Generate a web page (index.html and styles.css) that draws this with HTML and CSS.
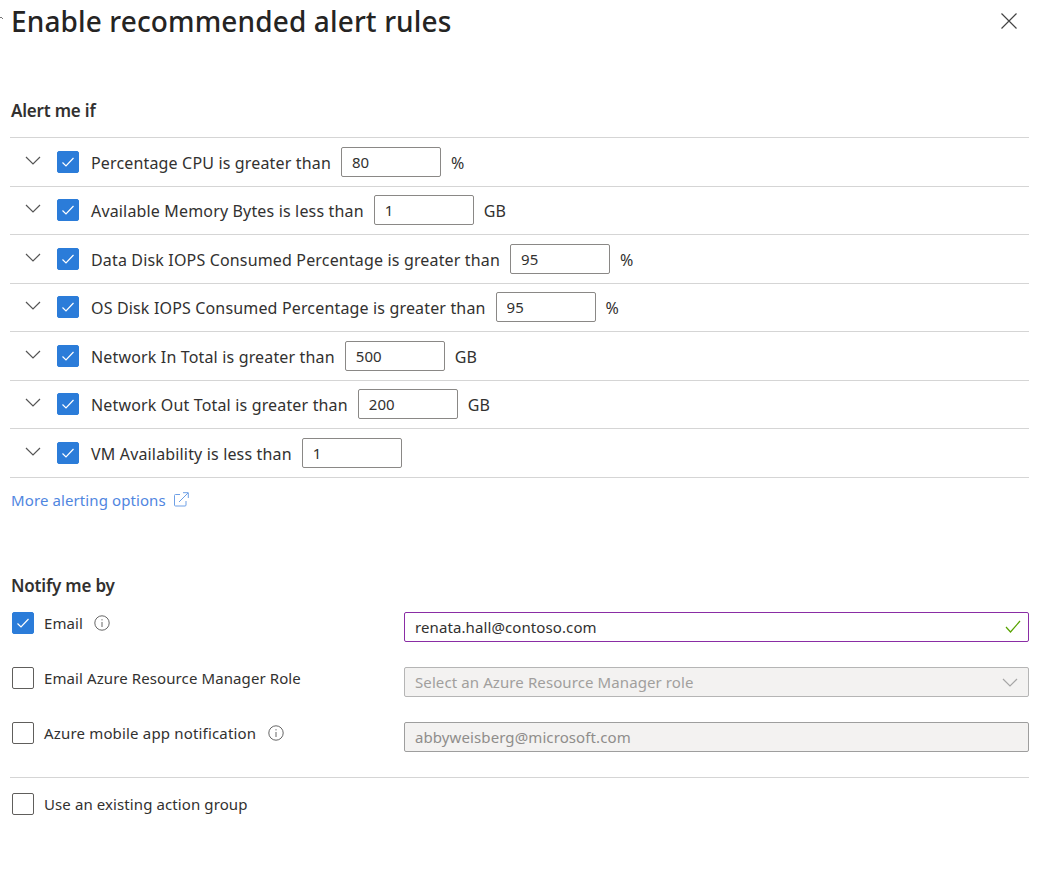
FILE: index.html
```html
<!DOCTYPE html>
<html lang="en">
<head>
    <meta charset="UTF-8">
    <meta name="viewport" content="width=device-width, initial-scale=1.0">
    <title>Enable recommended alert rules</title>
    <link rel="stylesheet" href="styles.css">
</head>
<body>
    <svg class="edge-mark" width="4" height="4" viewBox="0 0 4 4"><path d="M0 3L2 1L4 3" fill="none" stroke="#777" stroke-width="1"/></svg>

    <header class="title-bar">
        <h1>Enable recommended alert rules</h1>
        <button class="close" type="button" aria-label="Close">
            <svg width="16" height="16" viewBox="0 0 16 16"><path d="M0.5 0.5L15.5 15.5M15.5 0.5L0.5 15.5" fill="none" stroke="#444" stroke-width="1.2"/></svg>
        </button>
    </header>

    <h2 class="alert-heading">Alert me if</h2>

    <ul class="rules">
        <li class="rule">
            <svg class="chevron" width="16" height="9" viewBox="0 0 16 9"><path d="M1 1L8 8L15 1" fill="none" stroke="#555" stroke-width="1.2"/></svg>
            <span class="check on"><svg width="14" height="12" viewBox="0 0 14 12"><path d="M1.5 6.5L5 10L12.5 2" fill="none" stroke="#fff" stroke-width="1.2"/></svg></span>
            <span class="rule-text">Percentage CPU is greater than</span>
            <input class="num" type="text" value="80">
            <span class="unit">%</span>
        </li>
        <li class="rule">
            <svg class="chevron" width="16" height="9" viewBox="0 0 16 9"><path d="M1 1L8 8L15 1" fill="none" stroke="#555" stroke-width="1.2"/></svg>
            <span class="check on"><svg width="14" height="12" viewBox="0 0 14 12"><path d="M1.5 6.5L5 10L12.5 2" fill="none" stroke="#fff" stroke-width="1.2"/></svg></span>
            <span class="rule-text">Available Memory Bytes is less than</span>
            <input class="num" type="text" value="1">
            <span class="unit">GB</span>
        </li>
        <li class="rule">
            <svg class="chevron" width="16" height="9" viewBox="0 0 16 9"><path d="M1 1L8 8L15 1" fill="none" stroke="#555" stroke-width="1.2"/></svg>
            <span class="check on"><svg width="14" height="12" viewBox="0 0 14 12"><path d="M1.5 6.5L5 10L12.5 2" fill="none" stroke="#fff" stroke-width="1.2"/></svg></span>
            <span class="rule-text">Data Disk IOPS Consumed Percentage is greater than</span>
            <input class="num" type="text" value="95">
            <span class="unit">%</span>
        </li>
        <li class="rule">
            <svg class="chevron" width="16" height="9" viewBox="0 0 16 9"><path d="M1 1L8 8L15 1" fill="none" stroke="#555" stroke-width="1.2"/></svg>
            <span class="check on"><svg width="14" height="12" viewBox="0 0 14 12"><path d="M1.5 6.5L5 10L12.5 2" fill="none" stroke="#fff" stroke-width="1.2"/></svg></span>
            <span class="rule-text">OS Disk IOPS Consumed Percentage is greater than</span>
            <input class="num" type="text" value="95">
            <span class="unit">%</span>
        </li>
        <li class="rule">
            <svg class="chevron" width="16" height="9" viewBox="0 0 16 9"><path d="M1 1L8 8L15 1" fill="none" stroke="#555" stroke-width="1.2"/></svg>
            <span class="check on"><svg width="14" height="12" viewBox="0 0 14 12"><path d="M1.5 6.5L5 10L12.5 2" fill="none" stroke="#fff" stroke-width="1.2"/></svg></span>
            <span class="rule-text">Network In Total is greater than</span>
            <input class="num" type="text" value="500">
            <span class="unit">GB</span>
        </li>
        <li class="rule">
            <svg class="chevron" width="16" height="9" viewBox="0 0 16 9"><path d="M1 1L8 8L15 1" fill="none" stroke="#555" stroke-width="1.2"/></svg>
            <span class="check on"><svg width="14" height="12" viewBox="0 0 14 12"><path d="M1.5 6.5L5 10L12.5 2" fill="none" stroke="#fff" stroke-width="1.2"/></svg></span>
            <span class="rule-text">Network Out Total is greater than</span>
            <input class="num" type="text" value="200">
            <span class="unit">GB</span>
        </li>
        <li class="rule">
            <svg class="chevron" width="16" height="9" viewBox="0 0 16 9"><path d="M1 1L8 8L15 1" fill="none" stroke="#555" stroke-width="1.2"/></svg>
            <span class="check on"><svg width="14" height="12" viewBox="0 0 14 12"><path d="M1.5 6.5L5 10L12.5 2" fill="none" stroke="#fff" stroke-width="1.2"/></svg></span>
            <span class="rule-text">VM Availability is less than</span>
            <input class="num" type="text" value="1">
        </li>
    </ul>

    <a class="more-link" href="#">More alerting options
        <svg width="15" height="15" viewBox="0 0 15 15"><path d="M6 2.5H1.5Q0.5 2.5 0.5 3.5V13Q0.5 14 1.5 14H11Q12 14 12 13V9M5 10L14 1M9 0.7H14.3V6" fill="none" stroke="#6ea0e6" stroke-width="1"/></svg>
    </a>

    <h2 class="notify-heading">Notify me by</h2>

    <div class="notify-grid">
        <div class="notify-label">
            <span class="check on"><svg width="14" height="12" viewBox="0 0 14 12"><path d="M1.5 6.5L5 10L12.5 2" fill="none" stroke="#fff" stroke-width="1.2"/></svg></span>
            <span>Email</span>
            <svg class="info" width="16" height="16" viewBox="0 0 16 16"><circle cx="8" cy="8" r="7.2" fill="none" stroke="#666" stroke-width="1"/><path d="M8 7V12M8 4.2V5.4" stroke="#666" stroke-width="1"/></svg>
        </div>
        <div class="field email-field">
            <span>renata.hall@contoso.com</span>
            <svg width="16" height="13" viewBox="0 0 16 13"><path d="M1 7L5.5 12L15 1" fill="none" stroke="#57a300" stroke-width="1.2"/></svg>
        </div>

        <div class="notify-label">
            <span class="check"></span>
            <span>Email Azure Resource Manager Role</span>
        </div>
        <div class="field select-field">
            <span>Select an Azure Resource Manager role</span>
            <svg width="16" height="9" viewBox="0 0 16 9"><path d="M1 1L8 8L15 1" fill="none" stroke="#a6a6a6" stroke-width="1.2"/></svg>
        </div>

        <div class="notify-label mobile-label">
            <span class="check"></span>
            <span>Azure mobile app notification</span>
            <svg class="info" width="16" height="16" viewBox="0 0 16 16"><circle cx="8" cy="8" r="7.2" fill="none" stroke="#666" stroke-width="1"/><path d="M8 7V12M8 4.2V5.4" stroke="#666" stroke-width="1"/></svg>
        </div>
        <div class="field disabled-field">
            <span>abbyweisberg@microsoft.com</span>
        </div>
    </div>

    <div class="existing-group">
        <span class="check"></span>
        <span>Use an existing action group</span>
    </div>
</body>
</html>
```

FILE: styles.css
```css
body {
    margin: 0;
    padding: 0 14px 0 11px;
    position: relative;
    background-color: white;
    color: #323130;
    font-family: "Noto Sans", "Open Sans", sans-serif;
    font-size: 15px;
    letter-spacing: 0.1px;
}
.edge-mark {
    position: absolute;
    left: -1px;
    top: 16px;
}
.title-bar {
    display: flex;
    justify-content: space-between;
    align-items: center;
    height: 42px;
}
h1 {
    margin: 0;
    font-size: 28px;
    font-weight: 500;
    letter-spacing: 0.13px;
    color: #252423;
}
.close {
    padding: 0;
    margin-right: 12px;
    border: none;
    background: none;
    display: flex;
}
h2 {
    margin: 0;
    font-size: 17px;
    font-weight: 600;
    letter-spacing: -0.2px;
    color: #323130;
}
.alert-heading {
    margin-top: 57px;
    height: 38px;
    line-height: 24px;
}
.rules {
    list-style: none;
    margin: 0 0 0 -1px;
    padding: 0;
    border-top: 1px solid #d5d5d5;
}
.rule {
    display: flex;
    align-items: center;
    height: 47.5px;
    padding-left: 15px;
    border-bottom: 1px solid #d5d5d5;
    font-size: 16px;
    letter-spacing: 0.16px;
}
.chevron {
    margin: 0 16px 3px 0;
}
.check {
    width: 22px;
    height: 22px;
    box-sizing: border-box;
    flex: none;
    display: flex;
    align-items: center;
    justify-content: center;
    border: 1px solid #605e5c;
    border-radius: 2px;
    background-color: white;
}
.check.on {
    border-color: #2b7cd9;
    background-color: #2b7cd9;
}
.rule-text {
    margin-left: 12px;
    padding-top: 2px;
}
.num {
    width: 100px;
    height: 30px;
    box-sizing: border-box;
    margin-left: 10px;
    padding: 0 10px;
    border: 1px solid #8a8886;
    border-radius: 2px;
    color: #323130;
    font-family: inherit;
    font-size: 15px;
}
.unit {
    margin-left: 10px;
    padding-top: 2px;
}
.more-link {
    display: flex;
    align-items: center;
    gap: 8px;
    margin-top: 11px;
    height: 22px;
    color: #4f86df;
    text-decoration: none;
}
.notify-heading {
    margin-top: 64px;
    height: 37px;
    line-height: 22px;
}
.notify-grid {
    display: grid;
    grid-template-columns: 393px 1fr;
    row-gap: 25px;
}
.notify-label {
    display: flex;
    align-items: flex-start;
    gap: 10px;
    height: 30px;
    padding-left: 1px;
    line-height: 23px;
}
.mobile-label {
    letter-spacing: 0.17px;
}
.info {
    margin: 3px 0 0 1px;
}
.mobile-label .info {
    margin-left: 2px;
}
.field {
    display: flex;
    justify-content: space-between;
    align-items: center;
    height: 30px;
    box-sizing: border-box;
    padding: 0 7px 0 10px;
    border: 1px solid #a6a6a6;
    border-radius: 2px;
}
.email-field {
    border-color: #8a2da5;
    color: #323130;
}
.select-field {
    padding-right: 10px;
    padding-top: 1px;
    background-color: #f3f2f1;
    border-color: #b5b5b5;
    color: #a19f9d;
}
.disabled-field {
    background-color: #f3f2f1;
    border-color: #9e9e9e;
    color: #8f8d8b;
}
.existing-group {
    display: flex;
    align-items: center;
    gap: 10px;
    margin: 25px 0 0 -1px;
    padding: 15px 0 0 2px;
    border-top: 1px solid #d5d5d5;
}
```
